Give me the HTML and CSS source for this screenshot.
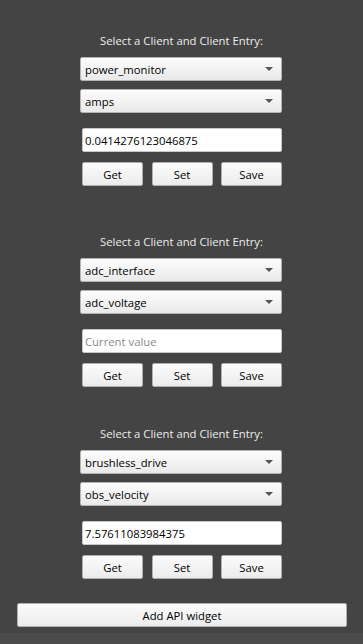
FILE: index.html
```html
<!DOCTYPE html>
<html>
<head>
<meta charset="utf-8">
<link rel="stylesheet" href="styles.css">
</head>
<body>
<div class="page">
  <div class="scroll">
    <div class="widget first">
      <div class="title">Select a Client and Client Entry:</div>
      <div class="combo"><span>power_monitor</span><span class="arrow"></span></div>
      <div class="combo second"><span>amps</span><span class="arrow"></span></div>
      <div class="field">0.0414276123046875</div>
      <div class="buttons">
        <div class="btn">Get</div><div class="btn">Set</div><div class="btn">Save</div>
      </div>
    </div>
    <div class="widget mid">
      <div class="title">Select a Client and Client Entry:</div>
      <div class="combo"><span>adc_interface</span><span class="arrow"></span></div>
      <div class="combo second"><span>adc_voltage</span><span class="arrow"></span></div>
      <div class="field placeholder">Current value</div>
      <div class="buttons">
        <div class="btn">Get</div><div class="btn">Set</div><div class="btn">Save</div>
      </div>
    </div>
    <div class="widget last">
      <div class="title">Select a Client and Client Entry:</div>
      <div class="combo"><span>brushless_drive</span><span class="arrow"></span></div>
      <div class="combo second"><span>obs_velocity</span><span class="arrow"></span></div>
      <div class="field">7.57611083984375</div>
      <div class="buttons">
        <div class="btn">Get</div><div class="btn">Set</div><div class="btn">Save</div>
      </div>
    </div>
    <div class="add-row">
      <div class="btn add">Add API widget</div>
    </div>
  </div>
  <div class="bottom"></div>
</div>
</body>
</html>
```
FILE: styles.css
```css
html, body {
  margin: 0;
  padding: 0;
  background: #444444;
}
body {
  font-family: "Open Sans", "Noto Sans", sans-serif;
  font-size: 11.3px;
  color: #000;
}
.page {
  width: 363px;
  height: 644px;
  display: flex;
  flex-direction: column;
  overflow: hidden;
}
.scroll {
  height: 633px;
  display: flex;
  flex-direction: column;
}
.bottom {
  flex: 1;
  background: #4b4b4b;
}
.widget {
  width: 202px;
  margin-left: 80px;
  display: flex;
  flex-direction: column;
}
.widget.first { margin-top: 33px; }
.widget.mid { margin-top: 48px; }
.widget.last { margin-top: 39px; }
.title {
  height: 16px;
  line-height: 16px;
  color: #ececec;
  text-align: center;
  white-space: nowrap;
  padding-left: 1px;
}
.combo {
  margin-top: 8px;
  height: 24px;
  box-sizing: border-box;
  border: 1px solid #b4b4b4;
  border-radius: 2px;
  background: linear-gradient(#fdfdfd, #e9e9e9);
  display: flex;
  align-items: center;
  justify-content: space-between;
  padding: 0 8px 0 4px;
}
.combo.second { margin-top: 8px; }
.arrow {
  width: 0;
  height: 0;
  border-left: 4px solid transparent;
  border-right: 4px solid transparent;
  border-top: 4px solid #555;
}
.field {
  margin-top: 15px;
  margin-left: 2px;
  height: 24px;
  box-sizing: border-box;
  background: #fff;
  border: 1px solid #c8c8c8;
  border-radius: 2px;
  display: flex;
  align-items: center;
  padding-left: 2px;
}
.field.placeholder { color: #8a8a8a; }
.buttons {
  margin-top: 10px;
  margin-left: 2px;
  display: grid;
  grid-template-columns: 61px 61px 61px;
  column-gap: 8.5px;
}
.btn {
  height: 24px;
  box-sizing: border-box;
  border: 1px solid #b0b0b0;
  border-radius: 2px;
  background: linear-gradient(#fbfbfb, #ececec);
  display: flex;
  align-items: center;
  justify-content: center;
}
.add-row {
  margin-top: 24px;
  padding-left: 17px;
}
.add {
  width: 330px;
}
```
